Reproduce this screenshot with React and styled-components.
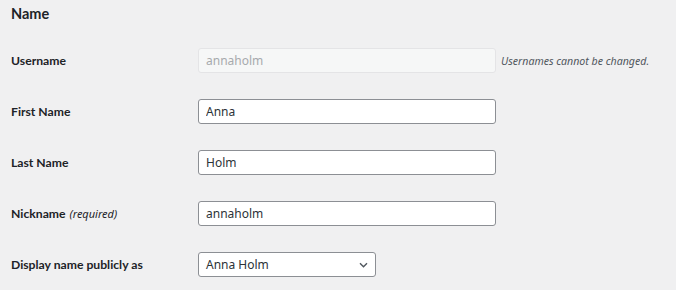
import React from "react";
import styled, { createGlobalStyle } from "styled-components";

const Global = createGlobalStyle`
  html, body { margin: 0; padding: 0; background: #f0f0f1; }
  body { font-family: "Noto Sans", "Open Sans", sans-serif; color: #1d2327; }
`;

const Page = styled.div`
  width: 676px;
  height: 290px;
  box-sizing: border-box;
  padding: 0 0 0 11px;
  overflow: hidden;
  background: #f0f0f1;
`;

const Heading = styled.h2`
  margin: 0;
  height: 35px;
  padding-top: 3px;
  box-sizing: border-box;
  font-family: Lato, "Noto Sans", sans-serif;
  font-size: 14.5px;
  font-weight: 700;
  line-height: 22px;
  color: #1d2327;
`;

const Row = styled.div`
  display: grid;
  grid-template-columns: 187px auto 1fr;
  align-items: center;
  height: 51px;
`;

const Label = styled.label`
  font-family: Lato, "Noto Sans", sans-serif;
  font-size: 12.2px;
  font-weight: 700;
  color: #1d2327;
  em {
    font-family: "Noto Sans", sans-serif;
    font-style: italic;
    font-weight: 400;
    font-size: 11px;
    margin-left: 1px;
  }
`;

const Input = styled.input`
  box-sizing: border-box;
  width: ${(p) => p.$w || 298}px;
  height: 25px;
  padding: 0 7px;
  font-family: inherit;
  font-size: 12px;
  color: #2c3338;
  background: #fff;
  border: 1px solid #8c8f94;
  border-radius: 3px;
  outline: none;
  &:disabled {
    background: #f6f7f7;
    border-color: #e4e4e6;
    color: #a7aaad;
  }
`;

const SelectBox = styled.div`
  box-sizing: border-box;
  width: 178px;
  height: 25px;
  display: flex;
  align-items: center;
  justify-content: space-between;
  padding: 0 7px 0 7px;
  font-size: 12px;
  color: #2c3338;
  background: #fff;
  border: 1px solid #8c8f94;
  border-radius: 3px;
`;

const Note = styled.span`
  margin-left: 5px;
  font-size: 10.6px;
  font-style: italic;
  color: #50575e;
`;

const Chevron = () => (
  <svg width="9" height="6" viewBox="0 0 9 6" fill="none">
    <path d="M1 1.2l3.5 3.5 3.5-3.5" stroke="#50575e" strokeWidth="1.4" />
  </svg>
);

export default function App() {
  return (
    <Page>
      <Global />
      <Heading>Name</Heading>
      <Row>
        <Label>Username</Label>
        <Input disabled value="annaholm" readOnly />
        <Note>Usernames cannot be changed.</Note>
      </Row>
      <Row>
        <Label>First Name</Label>
        <Input value="Anna" readOnly />
      </Row>
      <Row>
        <Label>Last Name</Label>
        <Input value="Holm" readOnly />
      </Row>
      <Row>
        <Label>
          Nickname <em>(required)</em>
        </Label>
        <Input value="annaholm" readOnly />
      </Row>
      <Row>
        <Label>Display name publicly as</Label>
        <SelectBox>
          <span>Anna Holm</span>
          <Chevron />
        </SelectBox>
      </Row>
    </Page>
  );
}
